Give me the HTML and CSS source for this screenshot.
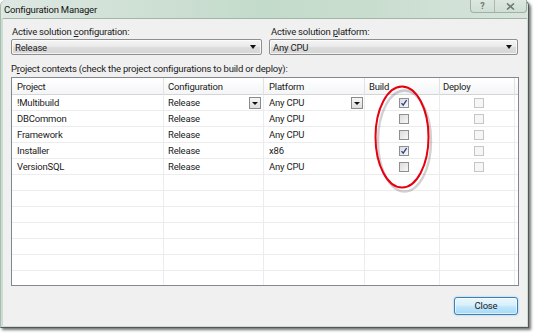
FILE: index.html
```html
<!DOCTYPE html>
<html>
<head>
<meta charset="utf-8">
<link rel="stylesheet" href="styles.css">
</head>
<body>
<div class="window">
  <div class="titlebar">
    <span class="title">Configuration Manager</span>
    <div class="caption-btns">
      <span class="cbtn help">?</span>
      <span class="cbtn close"><svg width="9" height="7" viewBox="0 0 9 7"><path d="M1 0.5 L8 6.5 M8 0.5 L1 6.5" stroke="#6f7a74" stroke-width="1.6" fill="none"/></svg></span>
    </div>
  </div>
  <div class="client">
    <div class="top-row">
      <div class="field">
        <div class="label">Active solution <u>c</u>onfiguration:</div>
        <div class="combo"><span>Release</span><span class="arrow"></span></div>
      </div>
      <div class="field">
        <div class="label">Active solution <u>p</u>latform:</div>
        <div class="combo"><span>Any CPU</span><span class="arrow"></span></div>
      </div>
    </div>
    <div class="label contexts">P<u>r</u>oject contexts (check the project configurations to build or deploy):</div>
    <div class="grid">
      <div class="row head">
        <div class="cell">Project</div>
        <div class="cell">Configuration</div>
        <div class="cell">Platform</div>
        <div class="cell">Build</div>
        <div class="cell">Deploy</div>
        <div class="cell filler"></div>
      </div>
      <div class="row">
        <div class="cell">!Multibuild</div>
        <div class="cell">Release<span class="dd"></span></div>
        <div class="cell">Any CPU<span class="dd"></span></div>
        <div class="cell check"><span class="cb on"><svg width="8" height="8" viewBox="0 0 8 8"><path d="M1.5 4.2 L3.2 6.2 L6.6 1.2" stroke="#2b3f8c" stroke-width="1.3" fill="none"/></svg></span></div>
        <div class="cell check"><span class="cb dis"></span></div>
        <div class="cell filler"></div>
      </div>
      <div class="row">
        <div class="cell">DBCommon</div>
        <div class="cell">Release</div>
        <div class="cell">Any CPU</div>
        <div class="cell check"><span class="cb"></span></div>
        <div class="cell check"><span class="cb dis"></span></div>
        <div class="cell filler"></div>
      </div>
      <div class="row">
        <div class="cell">Framework</div>
        <div class="cell">Release</div>
        <div class="cell">Any CPU</div>
        <div class="cell check"><span class="cb"></span></div>
        <div class="cell check"><span class="cb dis"></span></div>
        <div class="cell filler"></div>
      </div>
      <div class="row">
        <div class="cell">Installer</div>
        <div class="cell">Release</div>
        <div class="cell">x86</div>
        <div class="cell check"><span class="cb on"><svg width="8" height="8" viewBox="0 0 8 8"><path d="M1.5 4.2 L3.2 6.2 L6.6 1.2" stroke="#2b3f8c" stroke-width="1.3" fill="none"/></svg></span></div>
        <div class="cell check"><span class="cb dis"></span></div>
        <div class="cell filler"></div>
      </div>
      <div class="row">
        <div class="cell">VersionSQL</div>
        <div class="cell">Release</div>
        <div class="cell">Any CPU</div>
        <div class="cell check"><span class="cb"></span></div>
        <div class="cell check"><span class="cb dis"></span></div>
        <div class="cell filler"></div>
      </div>
      <div class="row"><div class="cell"></div><div class="cell"></div><div class="cell"></div><div class="cell"></div><div class="cell"></div><div class="cell filler"></div></div>
      <div class="row"><div class="cell"></div><div class="cell"></div><div class="cell"></div><div class="cell"></div><div class="cell"></div><div class="cell filler"></div></div>
      <div class="row"><div class="cell"></div><div class="cell"></div><div class="cell"></div><div class="cell"></div><div class="cell"></div><div class="cell filler"></div></div>
      <div class="row"><div class="cell"></div><div class="cell"></div><div class="cell"></div><div class="cell"></div><div class="cell"></div><div class="cell filler"></div></div>
      <div class="row"><div class="cell"></div><div class="cell"></div><div class="cell"></div><div class="cell"></div><div class="cell"></div><div class="cell filler"></div></div>
      <div class="row"><div class="cell"></div><div class="cell"></div><div class="cell"></div><div class="cell"></div><div class="cell"></div><div class="cell filler"></div></div>
      <div class="row"><div class="cell"></div><div class="cell"></div><div class="cell"></div><div class="cell"></div><div class="cell"></div><div class="cell filler"></div></div>
    </div>
    <div class="footer">
      <div class="btn">Close</div>
    </div>
  </div>
</div>
<svg class="annotation" width="64" height="112" viewBox="0 0 64 112">
  <ellipse cx="33" cy="56" rx="26.5" ry="50.5" fill="none" stroke="rgba(0,0,0,0.18)" stroke-width="2.4" transform="translate(1.5,2)"/>
  <ellipse cx="32" cy="54" rx="26.5" ry="50.5" fill="none" stroke="#e60010" stroke-width="2"/>
</svg>
</body>
</html>
```
FILE: styles.css
```css
* { box-sizing: border-box; }
html, body { margin: 0; padding: 0; background: #fff; }
body {
  font-family: Roboto, "Liberation Sans", sans-serif;
  font-size: 9.5px;
  letter-spacing: -0.2px;
  color: #1b1b1b;
  position: relative;
  width: 534px;
  height: 333px;
  overflow: hidden;
}
.window {
  width: 529px;
  height: 328px;
  background: #cbdcd1;
  border: 1px solid;
  border-color: #a8bcb0 #4f5a54 #4f5a54 #a8bcb0;
  border-top: none;
  border-radius: 6px 6px 0 0;
  box-shadow: 2px 2px 3px rgba(0,0,0,0.55);
  display: flex;
  flex-direction: column;
  padding: 0 1px 1px 2px;
}
.titlebar {
  height: 18px;
  flex: none;
  display: flex;
  align-items: flex-start;
  justify-content: space-between;
  margin: 0 -1px 0 -2px;
  padding-left: 3px;
  background: linear-gradient(to right, #dfe8e3 0%, #cfe0d5 25%, #c3dbca 50%, #c9ddcf 70%, #d8e4dd 100%);
  border-radius: 6px 6px 0 0;
}
.title {
  line-height: 19px;
  font-size: 9.5px;
  color: #141414;
}
.caption-btns {
  display: flex;
  height: 13px;
  margin-right: 1px;
  border: 1px solid #9fb0a6;
  border-top: none;
  border-radius: 0 0 4px 4px;
  background: linear-gradient(#dbe7df, #cfdfd5);
}
.cbtn {
  display: flex;
  align-items: center;
  justify-content: center;
  color: #6f7a74;
  font-size: 9px;
  font-weight: bold;
}
.cbtn.help { width: 24px; border-right: 1px solid #a9b9af; }
.cbtn.close { width: 31px; }
.client {
  flex: 1;
  background: #f0f0f0;
  border-top: 1px solid #a3b5a9;
  padding: 6px 8px 11px 8px;
  display: flex;
  flex-direction: column;
}
.label { line-height: 13px; height: 13px; white-space: nowrap; }
.label u { text-decoration-thickness: 1px; text-underline-offset: 1px; }
.top-row {
  display: grid;
  grid-template-columns: 251px 249px;
  column-gap: 7px;
}
.field .label { margin-bottom: 1px; padding-left: 1px; }
.field + .field .label { padding-left: 2px; }
.combo {
  height: 16px;
  border: 1px solid #8f8f8f;
  border-radius: 2px;
  background: linear-gradient(#f4f4f4 0%, #ebebeb 45%, #dcdcdc 55%, #d6d6d6 100%);
  display: flex;
  align-items: center;
  justify-content: space-between;
  padding: 0 5px 0 3px;
  box-shadow: inset 0 0 0 1px rgba(255,255,255,0.7);
}
.arrow {
  width: 0; height: 0;
  border-left: 3px solid transparent;
  border-right: 3px solid transparent;
  border-top: 4px solid #111;
}
.contexts { margin-top: 7px; }
.grid {
  margin-top: 2px;
  height: 209px;
  border: 1px solid #828790;
  background: #fff;
  overflow: hidden;
}
.row {
  display: grid;
  grid-template-columns: 152px 100px 101px 75px 75px 1fr;
  height: 16px;
  border-bottom: 1px solid #ececec;
}
.row.head {
  height: 17px;
  border-bottom: 1px solid #d5d5d5;
  background: linear-gradient(#ffffff, #f4f5f7);
}
.cell {
  border-right: 1px solid #e9edf1;
  padding-left: 5px;
  line-height: 15px;
  white-space: nowrap;
  position: relative;
}
.head .cell { line-height: 17px; border-right-color: #e2e2e2; }
.row .cell:nth-child(2) { padding-left: 4px; }
.row .cell:nth-child(4) { padding-left: 4px; }
.row .cell:nth-child(5) { padding-left: 3px; }
.cell.filler { border-right: none; padding: 0; }
.cell.check { display: flex; align-items: center; justify-content: center; padding: 0; }
.dd {
  position: absolute;
  right: 1px;
  top: 2px;
  width: 12px;
  height: 12px;
  border: 1px solid #8a8a8a;
  background: linear-gradient(#f7f7f7, #dedede);
  display: flex;
  align-items: center;
  justify-content: center;
}
.row .cell:nth-child(2) .dd { right: 2px; }
.dd::after {
  content: "";
  border-left: 3px solid transparent;
  border-right: 3px solid transparent;
  border-top: 3px solid #111;
}
.cb {
  width: 10px;
  height: 10px;
  border: 1px solid #8e8f8f;
  background: linear-gradient(135deg, #dcdcdc, #f7f7f7);
  display: flex;
  align-items: center;
  justify-content: center;
}
.cb.dis {
  border-color: #c6c6c6;
  background: #f6f6f6;
}
.footer {
  margin-top: 11px;
  display: flex;
  justify-content: flex-end;
  padding-right: 1px;
}
.btn {
  width: 64px;
  height: 18px;
  border: 1px solid #3c7fb1;
  border-radius: 3px;
  background: linear-gradient(#eaf6fd 0%, #d9f0fc 45%, #bee6fd 55%, #a7d9f5 100%);
  box-shadow: 0 0 2px #7ec3f0, inset 0 0 0 1px rgba(255,255,255,0.6);
  text-align: center;
  line-height: 16px;
}
.annotation {
  position: absolute;
  left: 370px;
  top: 83px;
}
```
